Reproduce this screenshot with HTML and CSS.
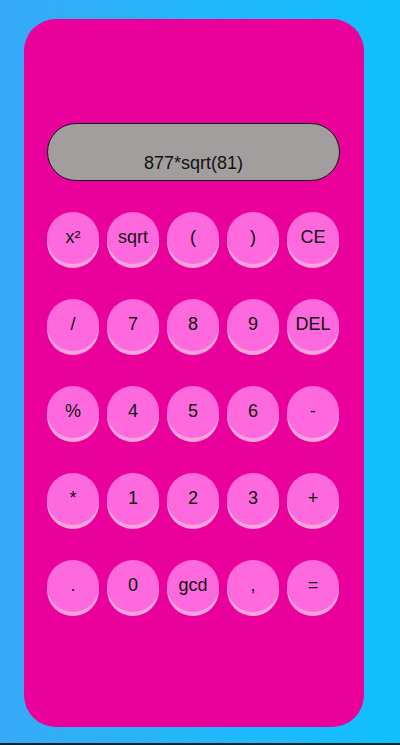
FILE: index.html
```html
<!DOCTYPE html>
<html>
<head>
<meta charset="utf-8">
<link rel="stylesheet" href="styles.css">
</head>
<body>
<div class="page">
  <div class="calc">
    <div class="display">877*sqrt(81)</div>
    <div class="keys">
      <button class="key">x²</button>
      <button class="key">sqrt</button>
      <button class="key">(</button>
      <button class="key">)</button>
      <button class="key">CE</button>
      <button class="key">/</button>
      <button class="key">7</button>
      <button class="key">8</button>
      <button class="key">9</button>
      <button class="key">DEL</button>
      <button class="key">%</button>
      <button class="key">4</button>
      <button class="key">5</button>
      <button class="key">6</button>
      <button class="key">-</button>
      <button class="key">*</button>
      <button class="key">1</button>
      <button class="key">2</button>
      <button class="key">3</button>
      <button class="key">+</button>
      <button class="key">.</button>
      <button class="key">0</button>
      <button class="key">gcd</button>
      <button class="key">,</button>
      <button class="key">=</button>
    </div>
  </div>
</div>
</body>
</html>
```
FILE: styles.css
```css
html {
  background: #06222b;
}
body {
  margin: 0;
  font-family: "Liberation Sans", Arial, sans-serif;
}
.page {
  height: 743px;
  background: linear-gradient(90deg, #38a9f6 0%, #22b7fa 50%, #10bffd 100%);
  padding: 19px 0 0 24px;
  box-sizing: border-box;
}
.calc {
  width: 340px;
  height: 708px;
  box-sizing: border-box;
  background: #ea009b;
  border-radius: 32px;
  padding: 104px 24px 0 23px;
}
.display {
  height: 58px;
  box-sizing: border-box;
  background: #a39e9e;
  border: 1px solid #111;
  border-radius: 29px;
  display: flex;
  align-items: flex-end;
  justify-content: center;
  padding: 0 0 6px 0;
  font-size: 18px;
  line-height: 21px;
  color: #111;
}
.keys {
  margin-top: 31px;
  display: grid;
  grid-template-columns: repeat(5, 52px);
  column-gap: 8px;
  row-gap: 35px;
}
.key {
  width: 52px;
  height: 52px;
  padding: 0 0 2px 0;
  border: none;
  border-radius: 50%;
  background: #fe6ade;
  box-shadow: 0 4px 0 #f7a6dd;
  font-family: "Liberation Sans", Arial, sans-serif;
  font-size: 18px;
  color: #111;
  display: flex;
  align-items: center;
  justify-content: center;
}
```
